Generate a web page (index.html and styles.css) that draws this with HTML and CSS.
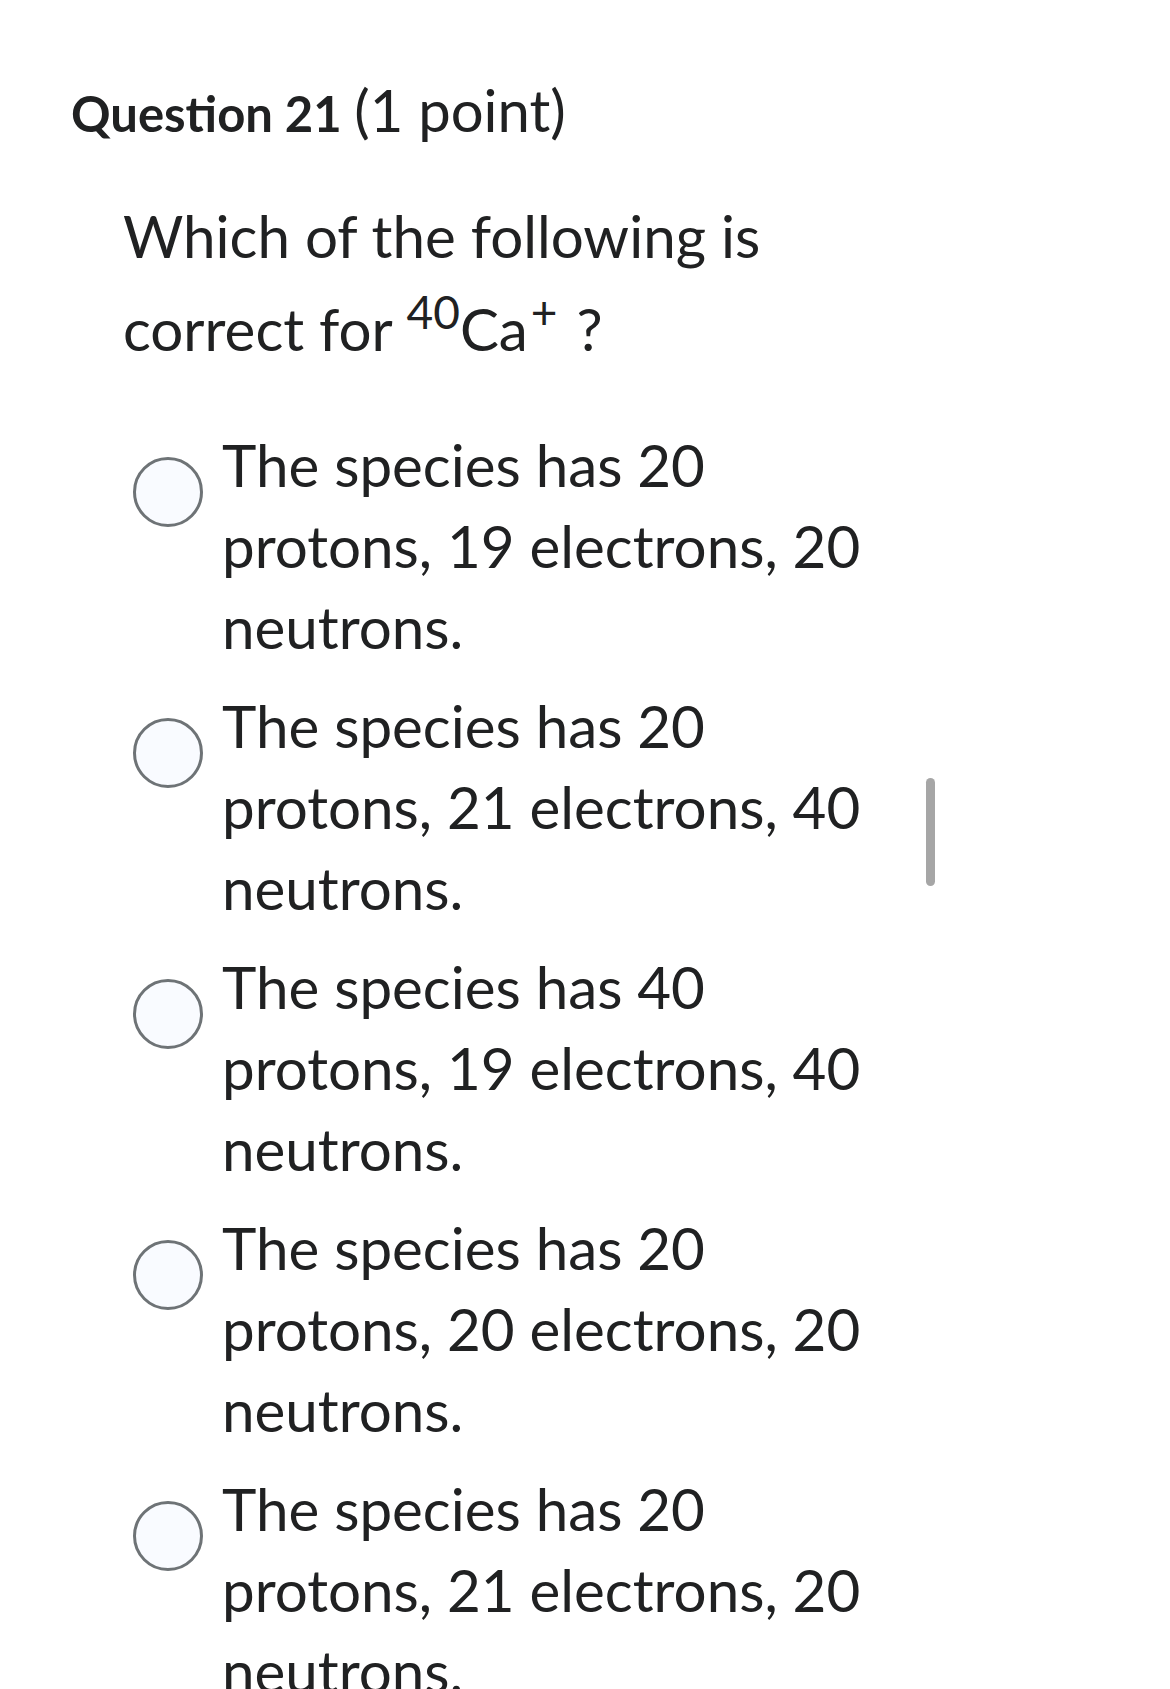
FILE: index.html
```html
<!DOCTYPE html>
<html lang="en">
<head>
<meta charset="utf-8">
<title>Question 21</title>
<link rel="stylesheet" href="styles.css">
</head>
<body>
<main class="page">
  <h2 class="q-title"><strong class="q-num">Question 21</strong> <span class="q-points">(1 point)</span></h2>
  <div class="q-body">
    <p class="q-text">Which of the following is correct for <sup class="sup">40</sup>Ca<sup class="sup sup-charge">+</sup> ?</p>
    <ul class="options">
      <li class="option"><span class="radio"></span><span class="label">The species has 20 protons, 19 electrons, 20 neutrons.</span></li>
      <li class="option"><span class="radio"></span><span class="label">The species has 20 protons, 21 electrons, 40 neutrons.</span></li>
      <li class="option"><span class="radio"></span><span class="label">The species has 40 protons, 19 electrons, 40 neutrons.</span></li>
      <li class="option"><span class="radio"></span><span class="label">The species has 20 protons, 20 electrons, 20 neutrons.</span></li>
      <li class="option"><span class="radio"></span><span class="label">The species has 20 protons, 21 electrons, 20 neutrons.</span></li>
    </ul>
  </div>
  <div class="scrollbar"></div>
</main>
</body>
</html>
```
FILE: styles.css
```css
html, body {
  margin: 0;
  padding: 0;
  background: #ffffff;
}
body {
  font-family: Lato, "Noto Sans", "Liberation Sans", sans-serif;
  color: #202122;
  height: 1689px;
  overflow: hidden;
}
.page {
  position: relative;
  padding: 81px 0 0 71px;
}
.q-title {
  margin: 0;
  font-size: 49px;
  line-height: 58px;
  font-weight: 400;
}
.q-num {
  font-weight: 700;
}
.q-points {
  font-size: 58px;
  font-weight: 400;
}
.q-body {
  margin-top: 47px;
}
.q-text {
  margin: 0 0 0 52px;
  width: 700px;
  font-size: 58.3px;
  line-height: 93px;
}
.sup {
  font-size: 46px;
  line-height: 0;
  vertical-align: 22px;
}
.sup-charge {
  margin-left: 3px;
  margin-right: 4px;
}
.options {
  list-style: none;
  margin: 48.5px 0 0 0;
  padding: 0;
  display: flex;
  flex-direction: column;
  gap: 18px;
}
.option {
  display: flex;
  align-items: flex-start;
  gap: 19px;
  margin-left: 62px;
}
.radio {
  flex: none;
  box-sizing: border-box;
  width: 70px;
  height: 70px;
  margin-top: 33px;
  border: 3px solid #6e7376;
  border-radius: 50%;
  background: #f9fbff;
}
.label {
  width: 690px;
  font-size: 58.3px;
  line-height: 81px;
}
.scrollbar {
  position: absolute;
  left: 926px;
  top: 778px;
  width: 9px;
  height: 108px;
  border-radius: 5px;
  background: #a6a6a6;
}
```
